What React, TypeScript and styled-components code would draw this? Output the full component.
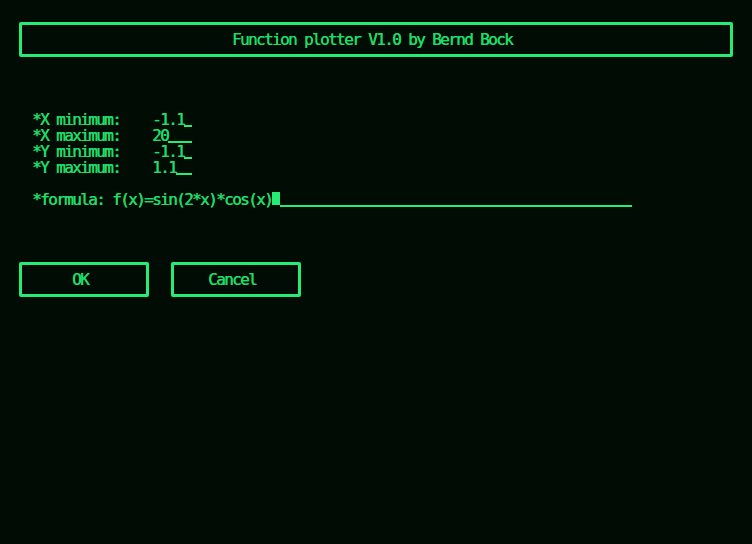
import React from "react";
import styled, { createGlobalStyle } from "styled-components";

const BG = "#010c04";
const FG = "#1fdc68";
const LINE = "#27ec74";

const Global = createGlobalStyle`
  html, body { margin: 0; padding: 0; background: ${BG}; }
  body { width: 752px; height: 544px; overflow: hidden; }
  #root { width: 752px; height: 544px; }
`;

const Screen = styled.div`
  box-sizing: border-box;
  width: 752px;
  height: 544px;
  padding: 22px 19px 0 19px;
  display: flex;
  flex-direction: column;
  background: ${BG};
  color: ${FG};
  font-family: "DejaVu Sans Mono", "Liberation Mono", monospace;
  font-size: 16px;
  letter-spacing: -1.63px;
  line-height: 16px;
`;

const Txt = styled.span`
  display: inline-block;
  white-space: pre;
  height: 16px;
  text-shadow: 0.4px 0 0 ${FG};
`;

const Frame = styled.div`
  box-sizing: border-box;
  height: 35px;
  padding-right: 8px;
  border: 3px solid ${LINE};
  border-radius: 2px;
  display: flex;
  align-items: center;
  justify-content: center;
`;

const TitleBar = styled(Frame)`
  width: 714px;
`;

const Form = styled.div`
  margin-top: 55px;
  padding-left: 13px;
  display: flex;
  flex-direction: column;
`;

const Row = styled.div<{ $gapAbove?: boolean }>`
  display: flex;
  align-items: flex-start;
  height: 16px;
  margin-top: ${(p) => (p.$gapAbove ? "16px" : "0")};
`;

const Label = styled(Txt)<{ $cols: number }>`
  width: ${(p) => p.$cols * 8}px;
`;

const Fill = styled.span<{ $cols: number }>`
  display: inline-block;
  box-sizing: border-box;
  width: ${(p) => p.$cols * 8}px;
  height: 15px;
  border-bottom: 2px solid ${LINE};
`;

const Cursor = styled.span`
  display: inline-block;
  width: 8px;
  height: 13px;
  background: ${LINE};
`;

const ButtonRow = styled.div`
  margin-top: 54px;
  display: flex;
  gap: 22px;
`;

const Button = styled(Frame)`
  width: 130px;
`;

const fields = [
  { label: "*X minimum:", value: "-1.1" },
  { label: "*X maximum:", value: "20" },
  { label: "*Y minimum:", value: "-1.1" },
  { label: "*Y maximum:", value: "1.1" },
];

export default function App() {
  return (
    <>
      <Global />
      <Screen>
        <TitleBar>
          <Txt>Function plotter V1.0 by Bernd Bock</Txt>
        </TitleBar>
        <Form>
          {fields.map((f) => (
            <Row key={f.label}>
              <Label $cols={15}>{f.label}</Label>
              <Txt>{f.value}</Txt>
              <Fill $cols={5 - f.value.length} />
            </Row>
          ))}
          <Row $gapAbove>
            <Txt>*formula: f(x)=sin(2*x)*cos(x)</Txt>
            <Cursor />
            <Fill $cols={44} />
          </Row>
        </Form>
        <ButtonRow>
          <Button>
            <Txt>OK</Txt>
          </Button>
          <Button>
            <Txt>Cancel</Txt>
          </Button>
        </ButtonRow>
      </Screen>
    </>
  );
}
